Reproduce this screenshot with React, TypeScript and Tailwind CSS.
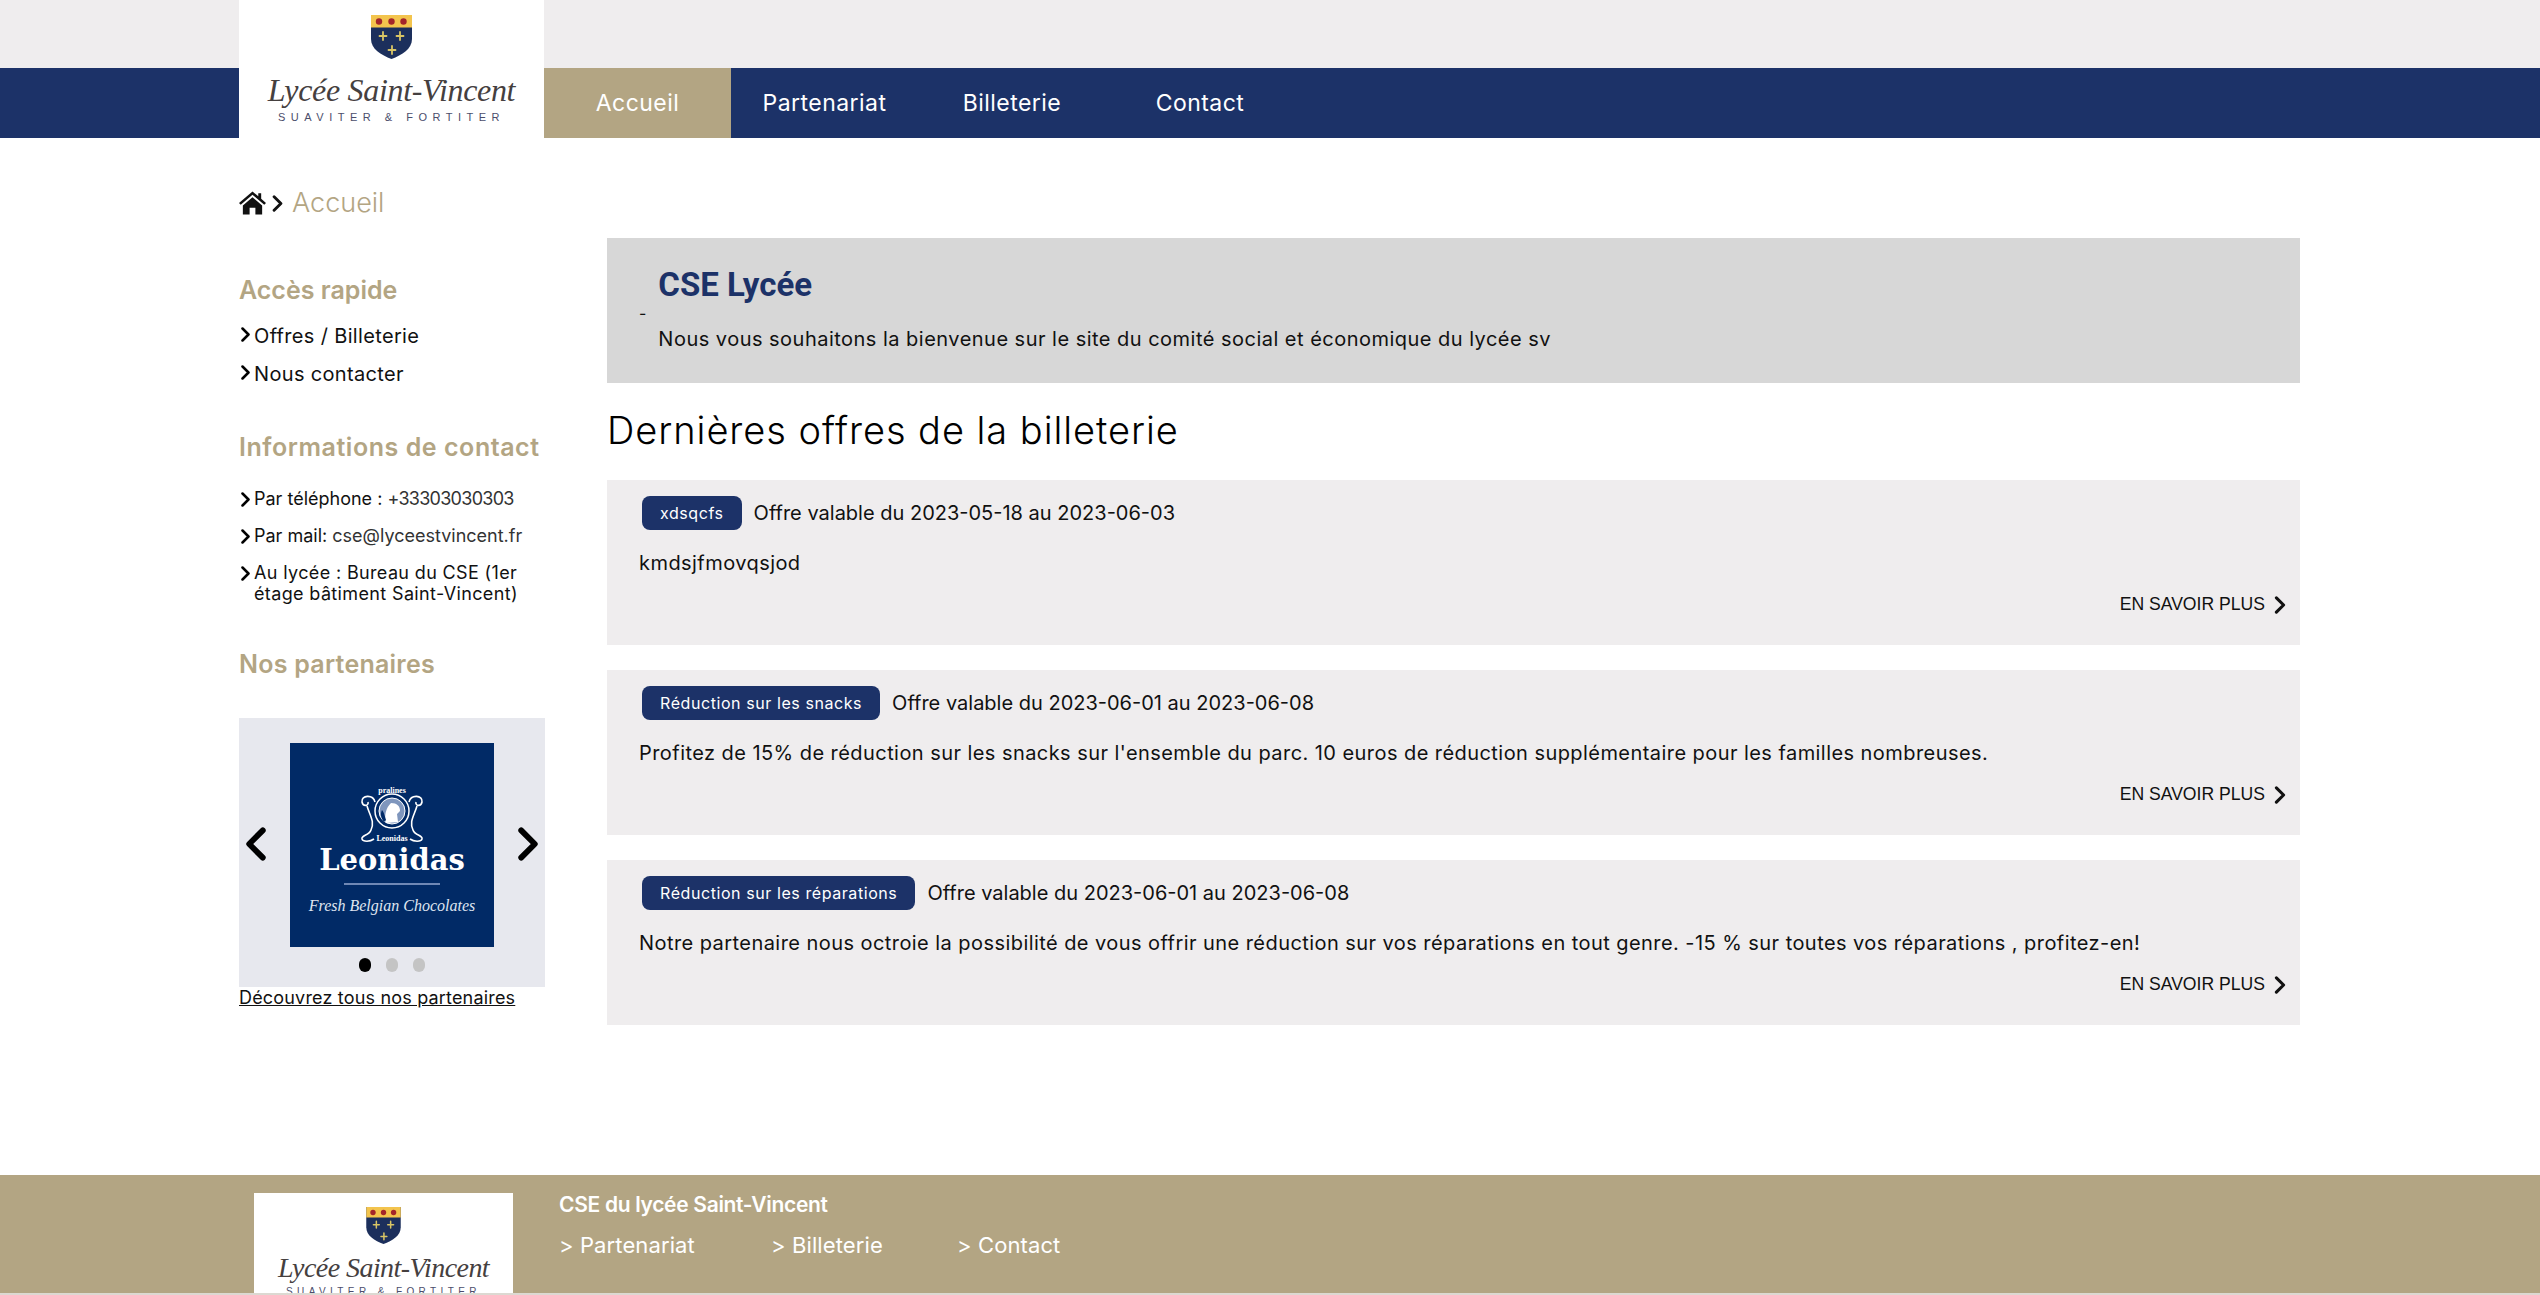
import React from 'react';

const mont = 'font-["Inter","Open_Sans",sans-serif]';

const Chevron: React.FC<{ className?: string; left?: boolean }> = ({ className = '', left = false }) => (
  <svg viewBox="0 0 12 20" className={className} fill="none" stroke="currentColor" strokeWidth="3.4" strokeLinecap="round" strokeLinejoin="round">
    <path d={left ? 'M10 2 2 10l8 8' : 'M2 2l8 8-8 8'} />
  </svg>
);

const Shield: React.FC<{ className?: string }> = ({ className = '' }) => (
  <svg viewBox="0 0 41 44" className={className}>
    <path d="M0 0h41v24c0 10-10 16-20.500 20C10 40 0 34 0 24z" fill="#1c2f5c" />
    <path d="M0 0h41v12.500H0z" fill="#f3c44d" />
    <g fill="#a3252a">
      <circle cx="8" cy="6.500" r="3.200" />
      <circle cx="20.500" cy="6.500" r="3.200" />
      <circle cx="32.500" cy="6.500" r="3.200" />
    </g>
    <g stroke="#d9c565" strokeWidth="1.800" strokeLinecap="round">
      <path d="M12 17v8M8.500 21h7" />
      <path d="M29 17v8M25.500 21h7" />
      <path d="M21 31v8M17.500 35h7" />
    </g>
  </svg>
);

const LeonidasLogo: React.FC = () => (
  <div className="flex h-[204px] w-[204px] flex-col items-center bg-[#012a66] pt-[39px] text-white">
    <svg viewBox="0 0 72 63" className="h-[63px] w-[72px]" fill="none" stroke="#fff">
      <circle cx="36" cy="29" r="17" strokeWidth="1.500" />
      <circle cx="36" cy="29" r="13" strokeWidth="1" fill="#7f96bd" />
      <path d="M30 41c-2-8 0-15 5-20 6 0 9 3 9 8l-3 3 1 8z" fill="#fff" stroke="none" />
      <path d="M28 40c-3-4-4-8-2-12 2 2 3 7 4 10z" fill="#012a66" stroke="none" />
      <path d="M19 20c-2-8-14-7-13 0 1 5 7 4 6 0M53 20c2-8 14-7 13 0-1 5-7 4-6 0" strokeWidth="1.600" />
      <path d="M11 24c3 10 8 16 4 24-2 6-10 5-9 9 1 3 8 3 12 0M61 24c-3 10-8 16-4 24 2 6 10 5 9 9-1 3-8 3-12 0" strokeWidth="1.600" />
      <text x="36" y="11" textAnchor="middle" fontSize="8" fontFamily="Liberation Serif, serif" fontWeight="700" fill="#fff" stroke="none">pralines</text>
      <text x="36" y="59" textAnchor="middle" fontSize="8" fontFamily="Liberation Serif, serif" fontWeight="700" fill="#fff" stroke="none">Leonidas</text>
    </svg>
    <div className="mt-[-3px] font-['DejaVu_Serif',serif] text-[29px] leading-[36px] font-bold">Leonidas</div>
    <div className="mt-[5px] h-[2px] w-[96px] bg-[#6f88b5]" />
    <div className="mt-[9px] font-['Liberation_Serif',serif] text-[16px] leading-[24px] text-[#dfe5f0] italic">Fresh Belgian Chocolates</div>
  </div>
);

const SideLink: React.FC<{ className?: string; children: React.ReactNode }> = ({ className = '', children }) => (
  <div className={`flex ${className}`}>
    <Chevron className="mt-[4px] mr-[2px] h-[15px] w-[13px] shrink-0 text-black" />
    <div>{children}</div>
  </div>
);

const Offer: React.FC<{ tag: string; dates: string; text: string }> = ({ tag, dates, text }) => (
  <div className="flex h-[165px] flex-col bg-[#efedee] pl-[32px] pr-[14px]">
    <div className="mt-[16px] flex items-center pl-[3px]">
      <span className="flex h-[34px] items-center rounded-[8px] bg-[#1c3268] px-[18px] text-[16px] tracking-[0.036em] text-white">{tag}</span>
      <span className="ml-[12px] text-[20px]">{dates}</span>
    </div>
    <p className="mt-[20px] text-[20px] leading-[26px] tracking-[0.022em]">{text}</p>
    <div className="mt-[16px] flex items-center justify-end font-['Liberation_Sans',sans-serif] text-[17.6px] leading-[24px]">
      EN SAVOIR PLUS
      <Chevron className="mt-[2px] ml-[9px] h-[18px] w-[12px]" />
    </div>
  </div>
);

const App: React.FC = () => (
  <div className={`h-[1295px] overflow-hidden bg-white text-[#111] ${mont}`}>
    <header className="grid h-[138px] grid-cols-[239px_305px_1fr] grid-rows-[68px_70px]">
      <div className="bg-[#efedee]" />
      <div className="row-span-2 flex flex-col items-center bg-white pt-[15px]">
        <Shield className="h-[44px] w-[41px]" />
        <div className="mt-[11px] font-['Liberation_Serif',serif] text-[32px] leading-[40px] tracking-[-0.01em] text-[#45403f] italic">Lycée Saint-Vincent</div>
        <div className="font-['Liberation_Sans',sans-serif] text-[11px] leading-[14px] tracking-[0.5em] text-[#4b4d6b]">SUAVITER &amp; FORTITER</div>
      </div>
      <div className="bg-[#efedee]" />
      <div className="bg-[#1c3268]" />
      <nav className="flex bg-[#1c3268] text-[23px] tracking-[0.02em] text-white">
        <a className="flex w-[187px] items-center justify-center bg-[#b3a583]">Accueil</a>
        <a className="flex w-[187px] items-center justify-center">Partenariat</a>
        <a className="flex w-[188px] items-center justify-center">Billeterie</a>
        <a className="flex w-[188px] items-center justify-center">Contact</a>
      </nav>
    </header>

    <div className="ml-[239px] flex w-[2061px] items-start">
      <aside className="w-[306px]">
        <div className="mt-[49px] flex h-[32px] items-center">
          <svg viewBox="0 0 28 24" className="h-[24px] w-[27px]" fill="currentColor">
            <path d="M14 0 0 12l1.800 1.800L14 3.500l12.200 10.300L28 12l-5-4.300V2h-3v3.100z" />
            <path d="M14 6 4 14.500V24h7v-7h6v7h7v-9.500z" />
          </svg>
          <Chevron className="ml-[6px] h-[17px] w-[11px]" />
          <span className="ml-[9px] text-[27px] font-light text-[#b3a583]">Accueil</span>
        </div>

        <h3 className="mt-[55px] text-[25px] leading-[32px] font-semibold text-[#b3a583]">Accès rapide</h3>
        <div className="mt-[17px] space-y-[12px] text-[20px] leading-[26px] tracking-[0.017em]">
          <SideLink>Offres / Billeterie</SideLink>
          <SideLink>Nous contacter</SideLink>
        </div>

        <h3 className="mt-[44px] text-[25px] leading-[32px] font-semibold tracking-[0.022em] text-[#b3a583]">Informations de contact</h3>
        <div className="mt-[25px] space-y-[16px] text-[18px] leading-[21px]">
          <SideLink>Par téléphone : <span className="tracking-[-0.04em] text-[#333]">+33303030303</span></SideLink>
          <SideLink>Par mail: <span className="text-[#333]">cse@lyceestvincent.fr</span></SideLink>
          <SideLink className="tracking-[0.02em]">Au lycée : Bureau du CSE (1er étage bâtiment Saint-Vincent)</SideLink>
        </div>

        <h3 className="mt-[44px] text-[25px] leading-[32px] font-semibold tracking-[0.01em] text-[#b3a583]">Nos partenaires</h3>
        <div className="mt-[38px] flex h-[269px] flex-col items-center bg-[#e7e8ee] pt-[25px]">
          <div className="flex w-full items-center justify-between px-[6px]">
            <Chevron left className="mb-[3px] h-[34px] w-[22px] text-black" />
            <LeonidasLogo />
            <Chevron className="mb-[3px] h-[34px] w-[22px] text-black" />
          </div>
          <div className="mt-[11px] flex gap-[15px]">
            <span className="h-[14px] w-[12px] rounded-full bg-black" />
            <span className="h-[14px] w-[12px] rounded-full bg-[#c4c4c4]" />
            <span className="h-[14px] w-[12px] rounded-full bg-[#c4c4c4]" />
          </div>
        </div>
        <a className="block text-[18px] leading-[22px] tracking-[0.01em] underline">Découvrez tous nos partenaires</a>
      </aside>

      <main className="ml-[62px] w-[1693px]">
        <section className="flex mt-[100px] h-[145px] bg-[#d7d7d7]">
          <span className="mt-[65px] ml-[32px] text-[16px] leading-[20px]">-</span>
          <div className="ml-[12px]">
            <h2 className="mt-[27px] font-['Roboto',sans-serif] text-[33px] leading-[40px] font-bold text-[#1c3268]">CSE Lycée</h2>
            <p className="mt-[21px] text-[20px] leading-[26px] tracking-[0.024em]">Nous vous souhaitons la bienvenue sur le site du comité social et économique du lycée sv</p>
          </div>
        </section>
        <h2 className="mt-[24px] text-[38px] leading-[46px] font-light tracking-[0.025em] text-black">Dernières offres de la billeterie</h2>
        <div className="mt-[27px] space-y-[25px]">
          <Offer tag="xdsqcfs" dates="Offre valable du 2023-05-18 au 2023-06-03" text="kmdsjfmovqsjod" />
          <Offer tag="Réduction sur les snacks" dates="Offre valable du 2023-06-01 au 2023-06-08" text="Profitez de 15% de réduction sur les snacks sur l'ensemble du parc. 10 euros de réduction supplémentaire pour les familles nombreuses." />
          <Offer tag="Réduction sur les réparations" dates="Offre valable du 2023-06-01 au 2023-06-08" text="Notre partenaire nous octroie la possibilité de vous offrir une réduction sur vos réparations en tout genre. -15 % sur toutes vos réparations , profitez-en!" />
        </div>
      </main>
    </div>

    <footer className="mt-[150px] flex h-[118px] overflow-hidden bg-[#b3a583] pl-[254px] text-white">
      <div className="mt-[18px] flex h-[140px] w-[259px] flex-col items-center bg-white pt-[14px]">
        <Shield className="h-[37px] w-[35px]" />
        <div className="mt-[7px] font-['Liberation_Serif',serif] text-[28px] leading-[34px] tracking-[-0.02em] text-[#45403f] italic">Lycée Saint-Vincent</div>
        <div className="mt-[1px] font-['Liberation_Sans',sans-serif] text-[10px] leading-[12px] tracking-[0.44em] text-[#4b4d6b]">SUAVITER &amp; FORTITER</div>
      </div>
      <div className="ml-[46px]">
        <div className="mt-[16px] text-[21px] leading-[28px] font-semibold tracking-[-0.015em]">CSE du lycée Saint-Vincent</div>
        <div className="mt-[11px] flex text-[22px] leading-[30px] tracking-[0.005em]">
          <a className="w-[212px]">&gt; Partenariat</a>
          <a className="w-[186px]">&gt; Billeterie</a>
          <a>&gt; Contact</a>
        </div>
      </div>
    </footer>
    <div className="h-[2px] bg-[#dcd9d2]" />
  </div>
);

export default App;
